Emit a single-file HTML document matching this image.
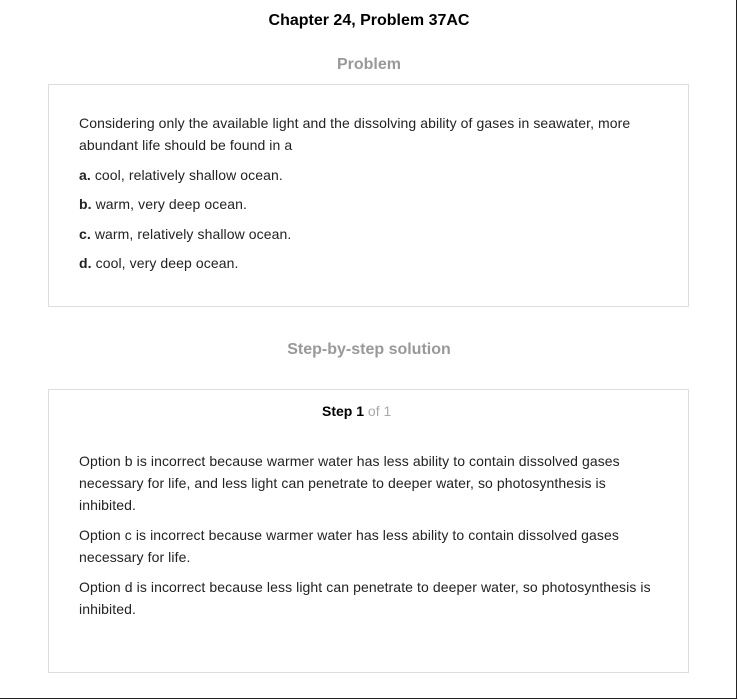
<html><head><style>
body{margin:0;width:738px;height:700px;position:relative;font-family:"Liberation Sans",Arial,sans-serif;color:#222;background:#fff}
.frame{position:absolute;left:0;top:0;width:736px;height:698px;border-right:1px solid #222;border-bottom:1px solid #222}
.a{position:absolute;white-space:nowrap}
h1{position:absolute;top:12px;left:0;width:738px;text-align:center;font-size:16px;margin:0;color:#000}
.h{position:absolute;left:0;width:738px;text-align:center;font-size:16px;font-weight:bold;color:#999}
.box{position:absolute;left:48px;width:639px;border:1px solid #ddd}
.t{position:absolute;left:79px;font-size:14px;line-height:22px;color:#222;white-space:nowrap;letter-spacing:0.09px}
</style></head><body>
<div class="frame"></div>
<h1>Chapter 24, Problem 37AC</h1>
<div class="h" style="top:56px">Problem</div>
<div class="box" style="top:84px;height:221px"></div>
<div class="t" style="top:112px">Considering only the available light and the dissolving ability of gases in seawater, more<br>abundant life should be found in a</div>
<div class="t" style="top:164px"><b>a.</b> cool, relatively shallow ocean.</div>
<div class="t" style="top:193px"><b>b.</b> warm, very deep ocean.</div>
<div class="t" style="top:223px"><b>c.</b> warm, relatively shallow ocean.</div>
<div class="t" style="top:252px"><b>d.</b> cool, very deep ocean.</div>
<div class="h" style="top:341px">Step-by-step solution</div>
<div class="box" style="top:389px;height:282px"></div>
<div class="a" style="top:403px;left:322px;font-size:14px"><b style="color:#000">Step 1</b> <span style="color:#aaa">of 1</span></div>
<div class="t" style="top:450px">Option b is incorrect because warmer water has less ability to contain dissolved gases<br>necessary for life, and less light can penetrate to deeper water, so photosynthesis is<br>inhibited.</div>
<div class="t" style="top:524px">Option c is incorrect because warmer water has less ability to contain dissolved gases<br>necessary for life.</div>
<div class="t" style="top:576px">Option d is incorrect because less light can penetrate to deeper water, so photosynthesis is<br>inhibited.</div>
</body></html>
